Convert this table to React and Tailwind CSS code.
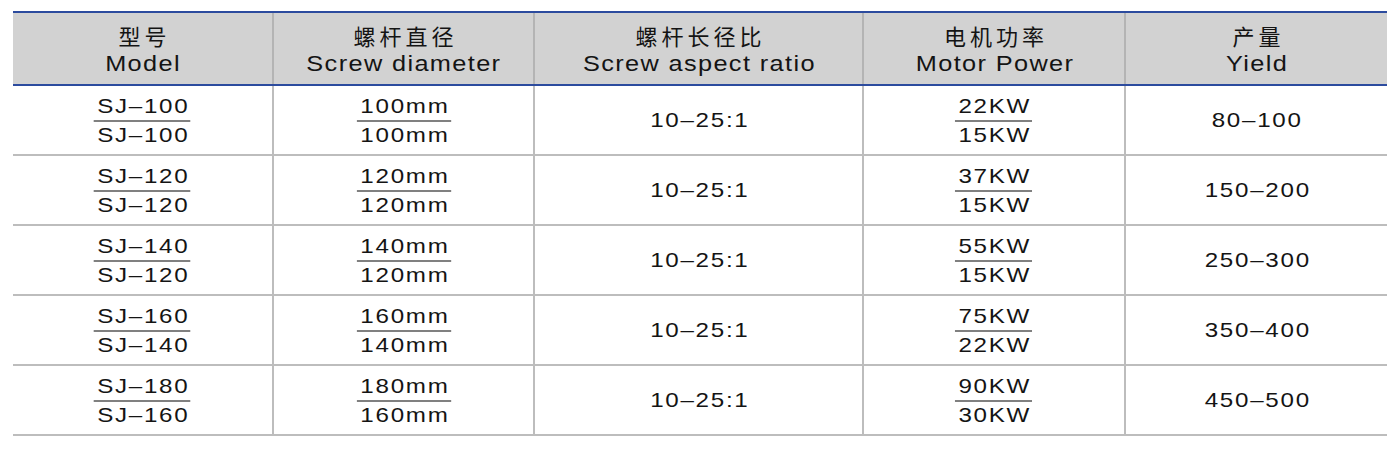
import React from "react";

const rows = [
  ["SJ–100", "SJ–100", "100mm", "100mm", "22KW", "15KW", "80–100"],
  ["SJ–120", "SJ–120", "120mm", "120mm", "37KW", "15KW", "150–200"],
  ["SJ–140", "SJ–120", "140mm", "120mm", "55KW", "15KW", "250–300"],
  ["SJ–160", "SJ–140", "160mm", "140mm", "75KW", "22KW", "350–400"],
  ["SJ–180", "SJ–160", "180mm", "160mm", "90KW", "30KW", "450–500"],
];

const headers = [
  ["型号", "Model"],
  ["螺杆直径", "Screw diameter"],
  ["螺杆长径比", "Screw aspect ratio"],
  ["电机功率", "Motor Power"],
  ["产量", "Yield"],
];

function Frac({ top, bottom }) {
  return (
    <div className="inline-flex flex-col items-stretch scale-x-[1.15]">
      <span className="block text-center leading-[22px] px-[1px] tracking-[1.5px] pl-[3px]">{top}</span>
      <div className="h-[2px] bg-[#808080] mt-[3px] mb-[2px]" />
      <span className="block text-center leading-[22px] px-[1px] tracking-[1.5px] pl-[3px]">{bottom}</span>
    </div>
  );
}

export default function App() {
  const font = { fontFamily: '"Liberation Sans", Arial, "Noto Sans CJK SC", sans-serif' };
  return (
    <div className="w-[1400px] h-[466px] bg-white text-[#141414]" style={font}>
      <div className="pt-[11px] pl-[13px]">
        <div className="w-[1374px]">
          <div className="grid grid-cols-[261px_261px_329px_262px_261px] bg-[#d2d2d2] border-t-2 border-b-2 border-[#2c4b9e] h-[75px]">
            {headers.map(([zh, en], i) => (
              <div
                key={i}
                className={`flex flex-col items-center justify-center pt-[3px] ${i < 4 ? "border-r-2 border-[#b4b4b4]" : ""}`}
              >
                <span
                  className="text-[22px] leading-[27px] tracking-[4px] pl-[4px]"
                  style={{ fontFamily: '"Noto Sans CJK SC", sans-serif' }}
                >
                  {zh}
                </span>
                <span className="text-[22px] leading-[29px] tracking-[1.2px] pl-[1px] scale-x-[1.15]">{en}</span>
              </div>
            ))}
          </div>
          {rows.map((r, idx) => (
            <div
              key={idx}
              className="grid grid-cols-[261px_261px_329px_262px_261px] h-[70px] border-b-2 border-[#bdbdbd] text-[21px]"
            >
              <div className="flex items-center justify-center border-r-2 border-[#bdbdbd]">
                <Frac top={r[0]} bottom={r[1]} />
              </div>
              <div className="flex items-center justify-center border-r-2 border-[#bdbdbd]">
                <Frac top={r[2]} bottom={r[3]} />
              </div>
              <div className="flex items-center justify-center border-r-2 border-[#bdbdbd]">
                <span className="tracking-[1.5px] pl-[1.5px] scale-x-[1.15]">10–25:1</span>
              </div>
              <div className="flex items-center justify-center border-r-2 border-[#bdbdbd]">
                <Frac top={r[4]} bottom={r[5]} />
              </div>
              <div className="flex items-center justify-center">
                <span className="tracking-[1.5px] pl-[1.5px] scale-x-[1.15]">{r[6]}</span>
              </div>
            </div>
          ))}
        </div>
      </div>
    </div>
  );
}
